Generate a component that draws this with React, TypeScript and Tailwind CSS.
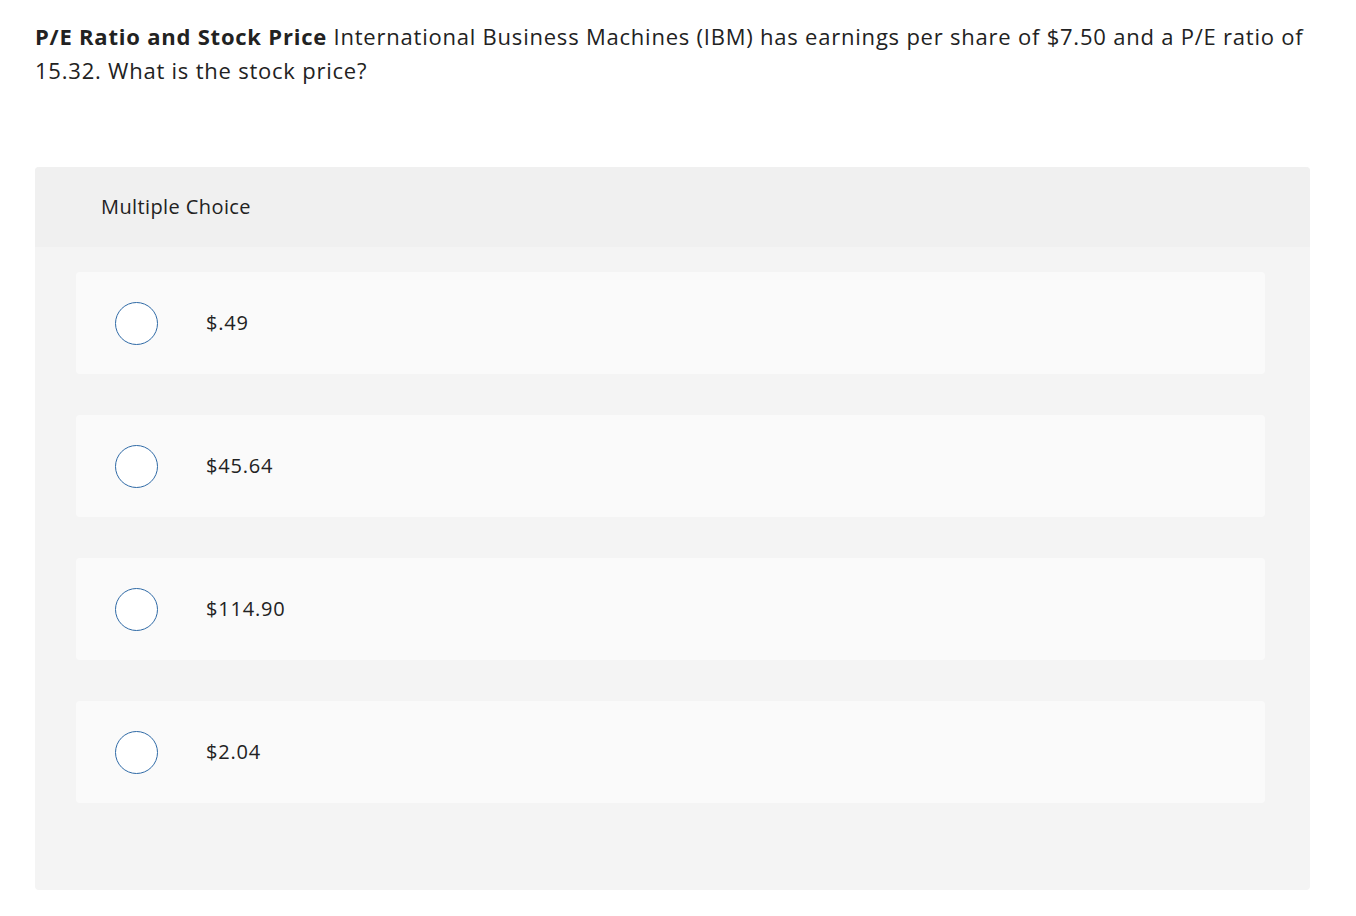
const options = ["$.49", "$45.64", "$114.90", "$2.04"];

export default function App() {
  return (
    <div
      className="min-h-screen bg-white px-[35px] pt-[19px] text-[#222]"
      style={{ fontFamily: "'Open Sans', Lato, sans-serif" }}
    >
      <p className="h-[68px] w-[1275px] text-[22px] leading-[34px] tracking-[0.78px]">
        <b className="font-bold">P/E Ratio and Stock Price</b> International Business Machines (IBM) has earnings per
        share of $7.50 and a P/E ratio of 15.32. What is the stock price?
      </p>

      <div className="mt-[80px] w-[1275px] overflow-hidden rounded bg-[#f4f4f4]">
        <div className="flex h-[80px] items-center bg-[#f0f0f0] pl-[66px] text-[20px] tracking-[0.4px]">
          Multiple Choice
        </div>
        <div className="flex flex-col gap-[41px] pl-[41px] pr-[45px] pt-[25px] pb-[87px]">
          {options.map((opt) => (
            <div
              key={opt}
              className="flex h-[102px] items-center rounded bg-[#fafafa] pl-[39px]"
            >
              <span className="h-[43px] w-[43px] shrink-0 rounded-full border border-[#2f6aa6] bg-white" />
              <span className="ml-[48px] text-[20px] tracking-[0.8px]">{opt}</span>
            </div>
          ))}
        </div>
      </div>
    </div>
  );
}
